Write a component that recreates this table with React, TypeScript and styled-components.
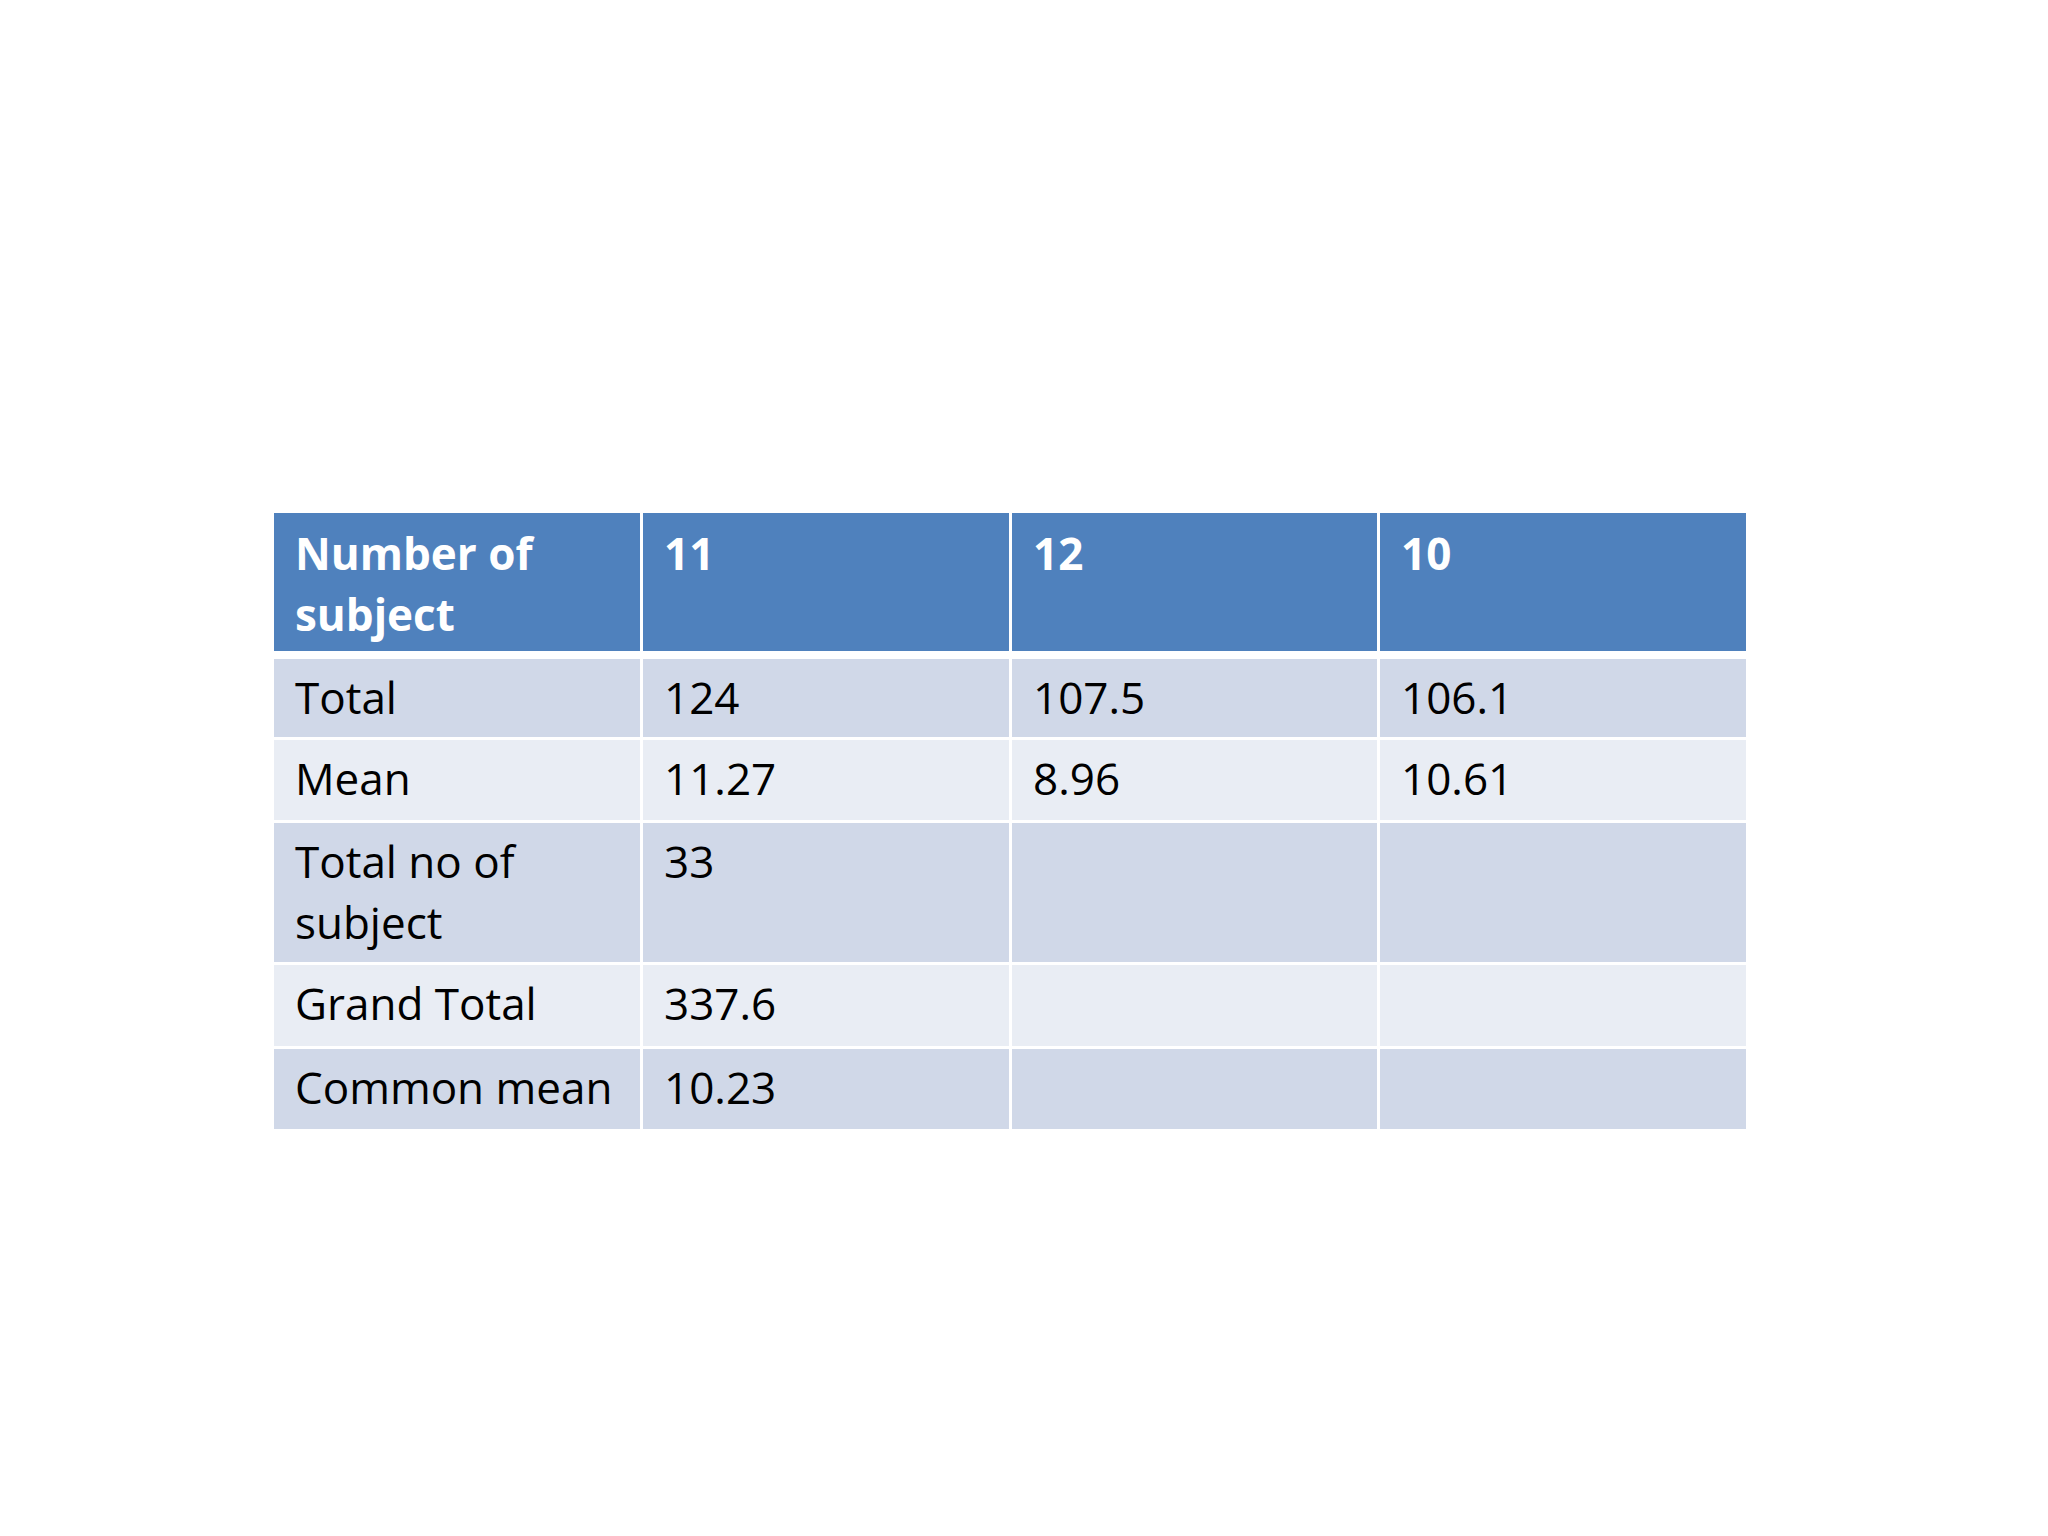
import React from 'react'
import styled, { createGlobalStyle } from 'styled-components'

const GlobalStyle = createGlobalStyle`
  html, body {
    margin: 0;
    padding: 0;
    background: #ffffff;
  }
  body {
    font-family: "Open Sans", "Liberation Sans", sans-serif;
  }
`

const Page = styled.div`
  width: 2048px;
  height: 1536px;
  box-sizing: border-box;
  padding: 513px 0 0 274px;
  background: #ffffff;
`

const Grid = styled.div`
  display: grid;
  grid-template-columns: 366px 366px 365px 366px;
  grid-template-rows: 143px 78px 80px 139px 81px 80px;
  column-gap: 3px;
  row-gap: 3px;
  width: max-content;
`

const HeadCell = styled.div`
  background: #4f81bd;
  color: #ffffff;
  font-weight: 700;
  font-size: 44px;
  line-height: 61px;
  padding: 10px 10px 0 21px;
  margin-bottom: 5px;
  box-sizing: border-box;
`

const Cell = styled.div<{ $tone: 'dark' | 'light' }>`
  background: ${({ $tone }) => ($tone === 'dark' ? '#d0d8e8' : '#e9edf4')};
  color: #000000;
  font-size: 44px;
  line-height: 61px;
  padding: 8px 10px 0 21px;
  box-sizing: border-box;
`

const header = ['Number of subject', '11', '12', '10']

const rows: string[][] = [
  ['Total', '124', '107.5', '106.1'],
  ['Mean', '11.27', '8.96', '10.61'],
  ['Total no of subject', '33', '', ''],
  ['Grand Total', '337.6', '', ''],
  ['Common mean', '10.23', '', ''],
]

export default function App() {
  return (
    <>
      <GlobalStyle />
      <Page>
        <Grid>
          {header.map((h, i) => (
            <HeadCell key={`h${i}`}>{h}</HeadCell>
          ))}
          {rows.map((row, r) =>
            row.map((c, i) => (
              <Cell key={`${r}-${i}`} $tone={r % 2 === 0 ? 'dark' : 'light'}>
                {c}
              </Cell>
            ))
          )}
        </Grid>
      </Page>
    </>
  )
}
